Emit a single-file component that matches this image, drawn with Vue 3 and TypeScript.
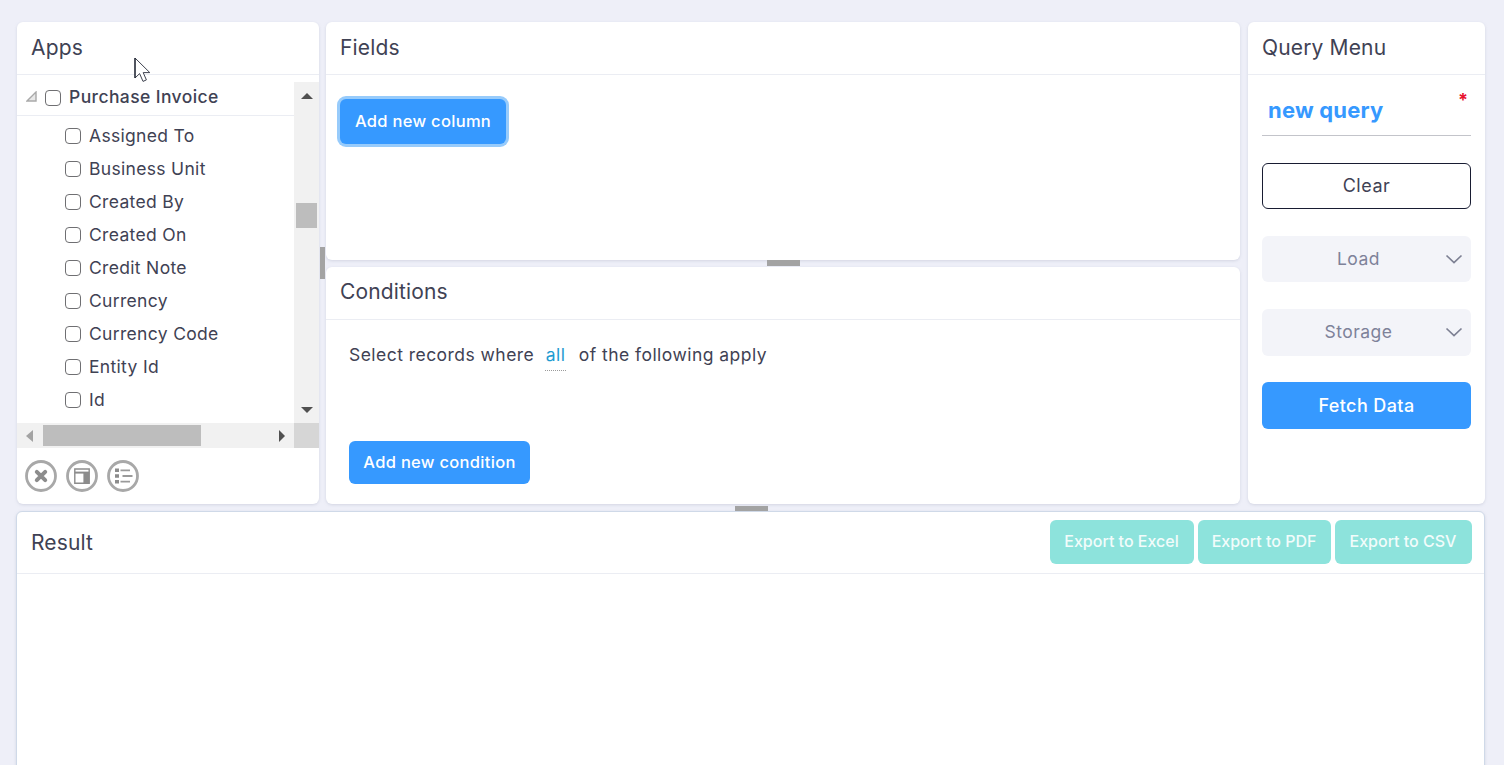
<script setup lang="ts">
const fields: string[] = ['Assigned To','Business Unit','Created By','Created On','Credit Note','Currency','Currency Code','Entity Id','Id']
</script>

<template>
  <div class="page">
    <div class="top">
      <section class="panel apps">
        <header class="head"><h2>Apps</h2></header>
        <div class="tree">
          <div class="tree-main">
            <div class="tree-root">
              <svg class="tri" width="11" height="11" viewBox="0 0 11 11"><path d="M10 1V10H1Z" fill="#e8e8e8" stroke="#a9a9a9" stroke-width="1.4"/></svg>
              <span class="cb"></span>
              <span class="root-label">Purchase Invoice</span>
            </div>
            <ul class="list">
              <li v-for="f in fields" :key="f"><span class="cb"></span>{{ f }}</li>
            </ul>
          </div>
          <div class="vbar">
            <span class="arr up"></span>
            <span class="vthumb"></span>
            <span class="arr down"></span>
          </div>
          <div class="hbar">
            <span class="arr left"></span>
            <span class="hthumb"></span>
            <span class="arr right"></span>
          </div>
          <div class="corner"></div>
        </div>
        <div class="tools">
          <svg width="32" height="32" viewBox="0 0 32 32"><circle cx="16" cy="16" r="14.5" fill="none" stroke="#a8a8a8" stroke-width="2.8"/><path d="M11.8 11.8L20.2 20.2M20.2 11.8L11.8 20.2" stroke="#8c8c8c" stroke-width="4" stroke-linecap="round"/></svg>
          <svg width="32" height="32" viewBox="0 0 32 32"><circle cx="16" cy="16" r="14.5" fill="none" stroke="#a8a8a8" stroke-width="2.8"/><path d="M8.8 9H23.2V23.2H8.8Z" fill="none" stroke="#8c8c8c" stroke-width="1.4"/><path d="M8.8 12.6H23.2" stroke="#8c8c8c" stroke-width="2"/><path d="M17.4 12.6H23.2V23.2H17.4Z" fill="#8c8c8c"/></svg>
          <svg width="32" height="32" viewBox="0 0 32 32"><circle cx="16" cy="16" r="14.5" fill="none" stroke="#a8a8a8" stroke-width="2.8"/><path d="M8 8.6H12V12H8ZM8 14.3H12V17.7H8ZM8 20H12V23.4H8Z" fill="#8c8c8c"/><path d="M13.5 10.3H23M15.5 16H25.5M13.5 21.7H23" stroke="#9a9a9a" stroke-width="1.8"/></svg>
        </div>
      </section>

      <div class="middle">
        <section class="panel fields">
          <header class="head"><h2>Fields</h2></header>
          <div class="fields-body">
            <button class="btn focused" type="button">Add new column</button>
          </div>
        </section>
        <section class="panel conditions">
          <header class="head"><h2>Conditions</h2></header>
          <div class="cond-body">
            <p class="sentence">Select records where <span class="all">all</span> of the following apply</p>
            <button class="btn" type="button">Add new condition</button>
          </div>
        </section>
        <span class="grip grip-h"></span>
      </div>

      <section class="panel menu">
        <header class="head"><h2>Query Menu</h2></header>
        <div class="menu-body">
          <div class="name"><span>new query</span><i>*</i></div>
          <button class="clear" type="button">Clear</button>
          <div class="select"><span>Load</span><svg width="18" height="10" viewBox="0 0 18 10"><path d="M1.5 1.5L9 8.5L16.5 1.5" fill="none" stroke="#7d8093" stroke-width="1.7"/></svg></div>
          <div class="select storage"><span>Storage</span><svg width="18" height="10" viewBox="0 0 18 10"><path d="M1.5 1.5L9 8.5L16.5 1.5" fill="none" stroke="#7d8093" stroke-width="1.7"/></svg></div>
          <button class="fetch" type="button">Fetch Data</button>
        </div>
      </section>
      <span class="grip grip-v"></span>
    </div>

    <section class="panel result">
      <span class="grip grip-r"></span>
      <header class="head result-head">
        <h2>Result</h2>
        <div class="exports">
          <button type="button">Export to Excel</button>
          <button type="button">Export to PDF</button>
          <button type="button">Export to CSV</button>
        </div>
      </header>
    </section>

    <svg class="cursor" width="20" height="28" viewBox="0 0 20 28"><path d="M1 1V21L5.6 16.6L9 24.4L12.4 22.9L9.2 15.6H15.8Z" fill="#fff" stroke="#3f4350" stroke-width="1"/><path d="M1 1V21" stroke="#1e2230" stroke-width="1.2"/></svg>
  </div>
</template>

<style>
html, body { margin: 0; height: 100%; overflow: hidden; background: #eeeff8; }
</style>

<style scoped>
* { box-sizing: border-box; }
.page {
  position: relative;
  height: 765px;
  overflow: hidden;
  padding: 22px 19px 0 17px;
  display: flex;
  flex-direction: column;
  gap: 7px;
  font-family: Inter, "Open Sans", sans-serif;
  color: #3f4254;
  background: #eeeff8;
}
.top {
  position: relative;
  display: grid;
  grid-template-columns: 302px 914px 238px;
  grid-template-rows: 482px;
  column-gap: 7px;
  height: 482px;
  flex: none;
}
.menu { margin-left: 1px; }
.panel {
  background: #fff;
  border-radius: 6px;
  box-shadow: 0 1px 3px rgba(160, 165, 190, .35);
  position: relative;
}
.head {
  height: 53px;
  border-bottom: 1px solid #ebedf3;
  display: flex;
  align-items: center;
  padding: 0 14px 1px;
}
h2 {
  margin: 0;
  font-size: 21px;
  font-weight: 400;
  letter-spacing: .15px;
  color: #3f4254;
}
.apps { display: flex; flex-direction: column; }
.tree {
  display: grid;
  grid-template-columns: 277px 25px;
  grid-template-rows: 341px 25px;
  margin-top: 7px;
  color: #3f4254;
}
.tree-main { overflow: hidden; }
.tree-root {
  height: 35px;
  margin-top: -1px;
  padding-bottom: 1px;
  border-bottom: 1px solid #ebedf3;
  display: flex;
  align-items: center;
  padding-left: 9px;
  font-size: 17.5px;
  font-weight: 500;
  letter-spacing: .4px;
}
.tri { margin-right: 8px; margin-top: -3px; }
.root-label { margin-left: 8px; margin-top: -2px; }
.list { list-style: none; margin: 3px 0 0; padding: 0 0 0 48px; }
.list li {
  height: 33px;
  display: flex;
  align-items: center;
  gap: 8px;
  font-size: 17.5px;
  letter-spacing: .32px;
}
.cb {
  width: 16px;
  height: 16px;
  flex: none;
  border: 1.5px solid #6f6f72;
  border-radius: 4px;
  background: #fff;
}
.vbar { position: relative; background: #f1f1f1; }
.hbar { position: relative; background: #f1f1f1; }
.corner { background: #d6d6d6; }
.vthumb { position: absolute; left: 2px; top: 121px; width: 21px; height: 25px; background: #bdbdbd; }
.hthumb { position: absolute; left: 26px; top: 2px; width: 158px; height: 21px; background: #bdbdbd; }
.arr { position: absolute; width: 0; height: 0; border-style: solid; border-color: transparent; }
.arr.up { left: 7px; top: 11px; border-width: 0 6px 6px; border-bottom-color: #505050; }
.arr.down { left: 7px; top: 325px; border-width: 6px 6px 0; border-top-color: #505050; }
.arr.left { left: 9px; top: 7px; border-width: 6px 7px 6px 0; border-right-color: #a3a3a3; }
.arr.right { left: 262px; top: 7px; border-width: 6px 0 6px 6px; border-left-color: #505050; }
.tools { display: flex; gap: 9px; padding: 12px 0 0 8px; }
.middle {
  position: relative;
  display: flex;
  flex-direction: column;
  gap: 7px;
  min-height: 0;
}
.fields { height: 238px; }
.fields-body { padding: 24px 14px; }
.conditions { flex: 1; min-height: 0; }
.conditions .head { height: 53px; padding-bottom: 3px; }
.btn {
  display: block;
  height: 43px;
  padding: 0 0 2px;
  border: 0;
  border-radius: 6px;
  background: #3699ff;
  color: #fff;
  font: 500 16.5px Inter, sans-serif;
  letter-spacing: .3px;
  white-space: nowrap;
}
.focused { box-shadow: 0 0 0 3px #97cbfb; width: 166px; height: 45px; }
.cond-body { padding: 25px 23px 0; }
.sentence {
  margin: 0;
  font-size: 17.5px;
  line-height: 20px;
  letter-spacing: .46px;
}
.all {
  display: inline-block;
  color: #1d9bd1;
  margin: 0 7px 0 5px;
  border-bottom: 1px dotted #9a9a9a;
  padding: 0 1px 5px;
}
.cond-body .btn { margin-top: 70px; width: 181px; }
.menu-body { padding: 0 14px; }
.name {
  height: 61px;
  border-bottom: 1px solid #c3c4ca;
  display: flex;
  justify-content: space-between;
  padding: 19px 3px 0 6px;
  color: #3699ff;
  font-size: 22px;
  font-weight: 700;
  line-height: 32px;
  letter-spacing: .2px;
}
.name i { color: #e8112d; font-style: normal; font-size: 18px; line-height: 18px; margin-top: -3px; letter-spacing: 0; }
.clear {
  display: block;
  width: 100%;
  height: 46px;
  margin-top: 27px;
  padding: 0 0 2px;
  background: #fff;
  border: 1px solid #181c32;
  border-radius: 6px;
  font: 400 18px Inter, sans-serif;
  letter-spacing: .5px;
  color: #3f4254;
}
.select {
  height: 46px;
  margin-top: 27px;
  background: #f3f4f9;
  border-radius: 6px;
  display: flex;
  align-items: center;
  justify-content: center;
  position: relative;
  padding: 0 16px 2px 0;
  font-size: 17.5px;
  color: #7e8299;
  letter-spacing: .5px;
}
.select.storage { height: 47px; padding-bottom: 3px; }
.select svg { position: absolute; right: 8px; top: 18px; }
.fetch {
  display: block;
  width: 100%;
  height: 47px;
  margin-top: 26px;
  border: 0;
  border-radius: 6px;
  background: #3699ff;
  color: #fff;
  font: 500 18px Inter, sans-serif;
  letter-spacing: .4px;
}
.result {
  flex: 1;
  margin-left: -1px;
  border: 1px solid #cfd9e8;
  min-height: 300px;
  border-radius: 6px 6px 0 0;
}
.result-head { height: 62px; padding: 0 12px 0 14px; justify-content: space-between; }
.result-head h2 { margin-top: -1px; }
.exports { display: flex; gap: 4px; margin-top: -1px; }
.exports button {
  height: 44px;
  padding: 0 1px 2px 0;
  border: 0;
  border-radius: 6px;
  background: #8de3dc;
  color: #f2fcfb;
  font: 500 16px Inter, sans-serif;
  white-space: nowrap;
}
.exports button:nth-child(1) { width: 144px; }
.exports button:nth-child(2) { width: 133px; }
.exports button:nth-child(3) { width: 137px; }
.grip { position: absolute; background: #a3a3a3; }
.grip-h { left: 441px; top: 238px; width: 33px; height: 6px; }
.grip-v { left: 303px; top: 225px; width: 5px; height: 32px; }
.grip-r { left: 718px; top: -6px; width: 33px; height: 5px; }
.cursor { position: absolute; left: 134px; top: 57px; }
</style>
